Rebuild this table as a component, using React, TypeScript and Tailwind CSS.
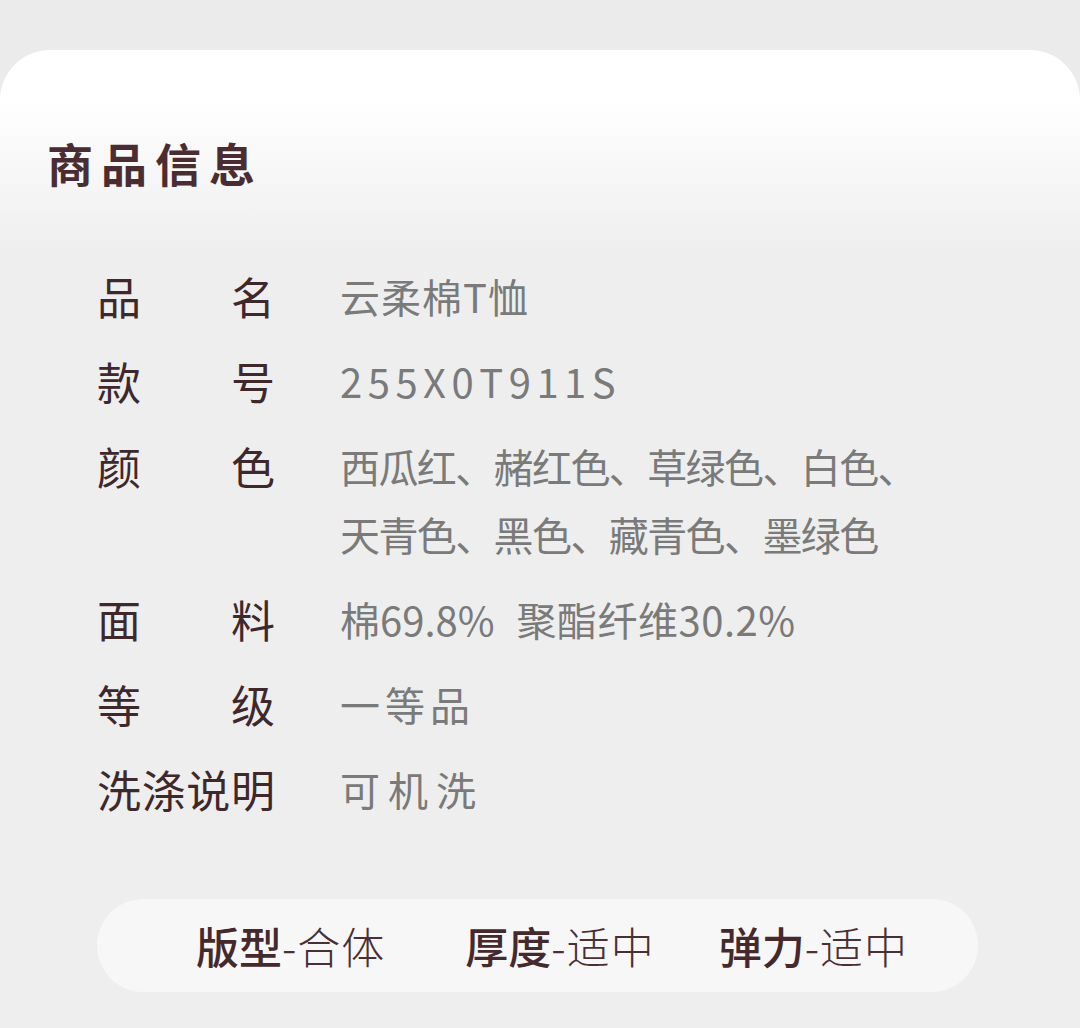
const rows: { label: string; value: string[]; valueClass?: string }[] = [
  { label: '品名', value: ['云柔棉T恤'], valueClass: 'tracking-[1px]' },
  { label: '款号', value: ['255X0T911S'], valueClass: 'tracking-[5.5px]' },
  {
    label: '颜色',
    value: ['西瓜红、赭红色、草绿色、白色、', '天青色、黑色、藏青色、墨绿色'],
    valueClass: 'text-[38px] tracking-[-1.6px]',
  },
  { label: '面料', value: [] },
  { label: '等级', value: ['一等品'], valueClass: 'tracking-[5px]' },
  { label: '洗涤说明', value: ['可机洗'], valueClass: 'tracking-[8px]' },
];

const specs = [
  { name: '版型', value: '-合体', className: 'ml-[99px]' },
  { name: '厚度', value: '-适中', className: 'ml-[80px]' },
  { name: '弹力', value: '-适中', className: 'ml-[64px]' },
];

export default function App() {
  return (
    <div
      className="min-h-[1028px] w-[1080px] bg-[#ebebeb] pt-[50px]"
      style={{ fontFamily: '"Noto Sans CJK SC", "Noto Sans", sans-serif' }}
    >
      <div className="min-h-[978px] rounded-t-[50px] bg-gradient-to-b from-white from-[5%] to-[#eeeeee] to-[21%] pt-[81px]">
        <h2 className="pl-[47px] text-[46px] leading-[62px] font-bold tracking-[8px] text-[#4a2d32]">
          商品信息
        </h2>

        <div className="mt-[69px] flex flex-col gap-[17px] pl-[97px]">
          {rows.map(row => (
            <div key={row.label} className="flex items-start">
              <div className="flex w-[178px] justify-between text-[44px] leading-[68px] text-[#3f282c]">
                {row.label.split('').map((ch, i) => (
                  <span key={i}>{ch}</span>
                ))}
              </div>
              <div className={`ml-[65px] text-[40px] leading-[68px] text-[#7a7a7a] ${row.valueClass ?? ''}`}>
                {row.label === '面料' ? (
                  <div>
                    <span>棉69.8%</span>
                    <span className="ml-[22px] tracking-[0.5px]">聚酯纤维30.2%</span>
                  </div>
                ) : (
                  row.value.map(line => <div key={line}>{line}</div>)
                )}
              </div>
            </div>
          ))}
        </div>

        <div className="mx-[97px] mt-[76px] flex h-[93px] w-[881px] items-center rounded-full bg-[#f7f7f7]">
          {specs.map(spec => (
            <div key={spec.name} className={`flex items-center text-[43px] leading-none ${spec.className}`}>
              <span className="font-medium text-[#45292d]">{spec.name}</span>
              <span className="font-light tracking-[1px] text-[#4a3034]">{spec.value}</span>
            </div>
          ))}
        </div>
      </div>
    </div>
  );
}
